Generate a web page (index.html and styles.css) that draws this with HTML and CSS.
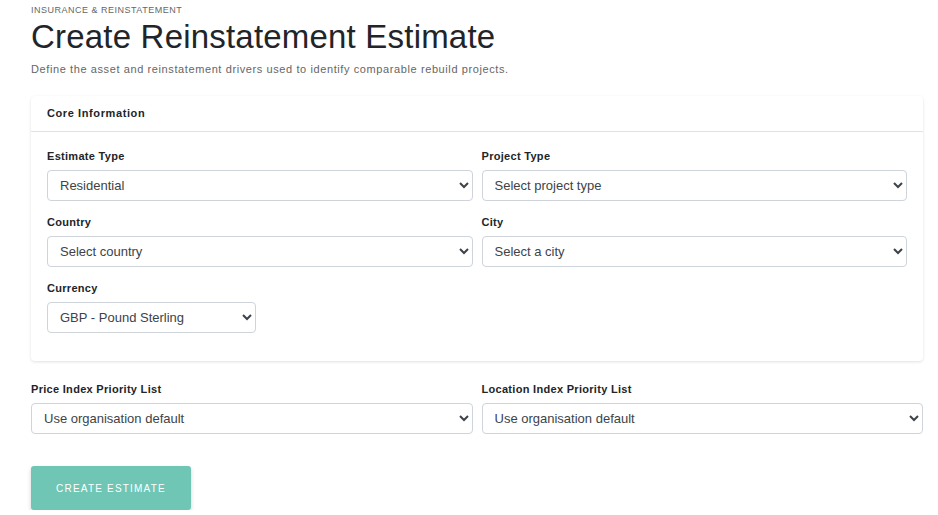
FILE: index.html
```html
<!DOCTYPE html>
<html lang="en">
<head>
    <meta charset="UTF-8">
    <meta name="viewport" content="width=device-width, initial-scale=1.0">
    <title>Create Reinstatement Estimate</title>
    <link rel="stylesheet" href="styles.css">
</head>
<body>
    <main class="page">
        <!-- Page heading -->
        <header class="page-head">
            <div class="eyebrow">Insurance &amp; Reinstatement</div>
            <h1>Create Reinstatement Estimate</h1>
            <p class="lead">Define the asset and reinstatement drivers used to identify comparable rebuild projects.</p>
        </header>

        <!-- Core information card -->
        <section class="card">
            <div class="card-head">Core Information</div>
            <div class="card-body">
                <div class="grid">
                    <div class="field">
                        <label for="estimate-type">Estimate Type</label>
                        <select id="estimate-type">
                            <option>Residential</option>
                            <option>Commercial</option>
                        </select>
                    </div>
                    <div class="field">
                        <label for="project-type">Project Type</label>
                        <select id="project-type">
                            <option>Select project type</option>
                        </select>
                    </div>
                    <div class="field">
                        <label for="country">Country</label>
                        <select id="country">
                            <option>Select country</option>
                        </select>
                    </div>
                    <div class="field">
                        <label for="city">City</label>
                        <select id="city">
                            <option>Select a city</option>
                        </select>
                    </div>
                </div>
                <div class="field">
                    <label for="currency">Currency</label>
                    <select id="currency" class="select-small">
                        <option>GBP - Pound Sterling</option>
                    </select>
                </div>
            </div>
        </section>

        <!-- Index priority lists -->
        <div class="grid priority">
            <div class="field">
                <label for="price-index">Price Index Priority List</label>
                <select id="price-index">
                    <option>Use organisation default</option>
                </select>
            </div>
            <div class="field">
                <label for="location-index">Location Index Priority List</label>
                <select id="location-index">
                    <option>Use organisation default</option>
                </select>
            </div>
        </div>

        <button type="button" class="btn-primary">Create Estimate</button>
    </main>
</body>
</html>
```

FILE: styles.css
```css
body {
    margin: 0;
    padding: 0;
    background-color: #fff;
    color: #212529;
    font-family: 'Liberation Sans', Arial, sans-serif;
}

.page {
    padding: 4px 15px 0 31px;
}

.eyebrow {
    font-size: 9px;
    line-height: 12px;
    letter-spacing: 0.5px;
    text-transform: uppercase;
    color: #666;
}

.page-head h1 {
    margin: 2px 0 0;
    font-size: 33px;
    line-height: 37px;
    font-weight: normal;
    letter-spacing: 0.2px;
    color: #212529;
}

.lead {
    margin: 7px 0 0;
    font-size: 11px;
    line-height: 14px;
    letter-spacing: 0.6px;
    color: #666;
}

.card {
    margin-top: 20px;
    background-color: #fff;
    border-radius: 4px;
    box-shadow: 0 1px 3px rgba(0, 0, 0, 0.12);
}

.card-head {
    padding: 10px 16px 11px;
    font-size: 11px;
    line-height: 14px;
    font-weight: bold;
    letter-spacing: 0.6px;
    border-bottom: 1px solid #dee2e6;
}

.card-body {
    padding: 17px 16px 14px;
}

.grid {
    display: grid;
    grid-template-columns: 1fr 1fr;
    column-gap: 9px;
}

.field {
    display: flex;
    flex-direction: column;
    align-items: flex-start;
    margin-bottom: 14px;
}

.field label {
    font-size: 11px;
    line-height: 14px;
    font-weight: bold;
    letter-spacing: 0.3px;
    color: #212529;
    margin-bottom: 7px;
}

.field select {
    width: 100%;
    height: 31px;
    padding: 0 8px;
    font-family: 'Liberation Sans', Arial, sans-serif;
    font-size: 13px;
    color: #3d4349;
    background-color: #fff;
    border: 1px solid #ced4da;
    border-radius: 4px;
}

.field .select-small {
    width: 209px;
}

.priority {
    margin-top: 21px;
}

.btn-primary {
    margin-top: 18px;
    width: 160px;
    height: 44px;
    font-family: 'Liberation Sans', Arial, sans-serif;
    font-size: 10px;
    letter-spacing: 1.2px;
    text-transform: uppercase;
    color: #fff;
    background-color: #6fc6b4;
    border: none;
    border-radius: 3px;
    box-shadow: 0 2px 4px rgba(0, 0, 0, 0.18);
}
```
